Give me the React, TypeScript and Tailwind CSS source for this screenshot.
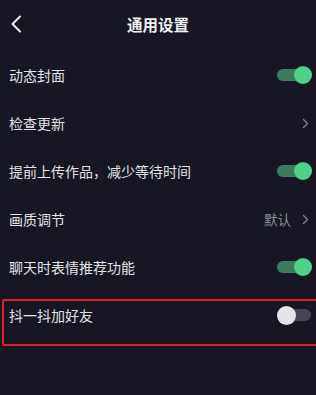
import type { FC } from "react";

type Row = {
  label: string;
  kind: "on" | "off" | "link";
  value?: string;
  marked?: boolean;
};

const rows: Row[] = [
  { label: "动态封面", kind: "on" },
  { label: "检查更新", kind: "link" },
  { label: "提前上传作品，减少等待时间", kind: "on" },
  { label: "画质调节", kind: "link", value: "默认" },
  { label: "聊天时表情推荐功能", kind: "on" },
  { label: "抖一抖加好友", kind: "off", marked: true }
];

const Chevron: FC = () => (
  <svg width="7" height="11" viewBox="0 0 7 11" fill="none">
    <path d="M1.5 1.5l4 4-4 4" stroke="#7d7e86" strokeWidth="1.4" strokeLinecap="round" strokeLinejoin="round" />
  </svg>
);

const Toggle: FC<{ on: boolean }> = ({ on }) =>
  on ? (
    <div className="relative w-[35px] h-[18px] flex items-center">
      <div className="w-[34px] h-[12px] rounded-full bg-[#3d7a5b]" />
      <div className="absolute right-0 top-0 w-[18px] h-[18px] rounded-full bg-[#4fd18b]" />
    </div>
  ) : (
    <div className="relative w-[35px] h-[19px] flex items-center">
      <div className="w-[34px] h-[12px] rounded-full bg-[#45464f]" />
      <div className="absolute left-0 top-0 w-[19px] h-[19px] rounded-full bg-[#e4e4e7]" />
    </div>
  );

export default function App() {
  return (
    <div
      className="w-[316px] h-[395px] overflow-hidden bg-[#161722] text-[#e2e2e5]"
      style={{ fontFamily: '"Noto Sans CJK SC", "Noto Sans", sans-serif' }}
    >
      <div className="h-[51px] flex items-center relative pb-[3px]">
        <div className="pl-[10px]">
          <svg width="12" height="18" viewBox="0 0 12 18" fill="none">
            <path d="M10 1.5L2.5 9l7.5 7.5" stroke="#ececef" strokeWidth="2" strokeLinecap="round" strokeLinejoin="round" />
          </svg>
        </div>
        <div className="absolute inset-x-0 top-[13px] text-center text-[15.5px] font-bold leading-[22px] text-[#f0f0f2]">
          通用设置
        </div>
      </div>
      {rows.map((r) => (
        <div key={r.label} className="relative h-12 flex items-center justify-between pl-[9px] pr-[4px]">
          <span className="text-[14px] leading-5">{r.label}</span>
          {r.kind === "link" ? (
            <div className="flex items-center gap-[11px] pr-[3px]">
              {r.value && <span className="text-[13.5px] text-[#8b8c94]">{r.value}</span>}
              <Chevron />
            </div>
          ) : (
            <Toggle on={r.kind === "on"} />
          )}
          {r.marked && (
            <div className="absolute left-[2px] -right-[6px] top-[8px] h-[47px] border-2 border-[#e0202c] rounded-[2px]" />
          )}
        </div>
      ))}
    </div>
  );
}
